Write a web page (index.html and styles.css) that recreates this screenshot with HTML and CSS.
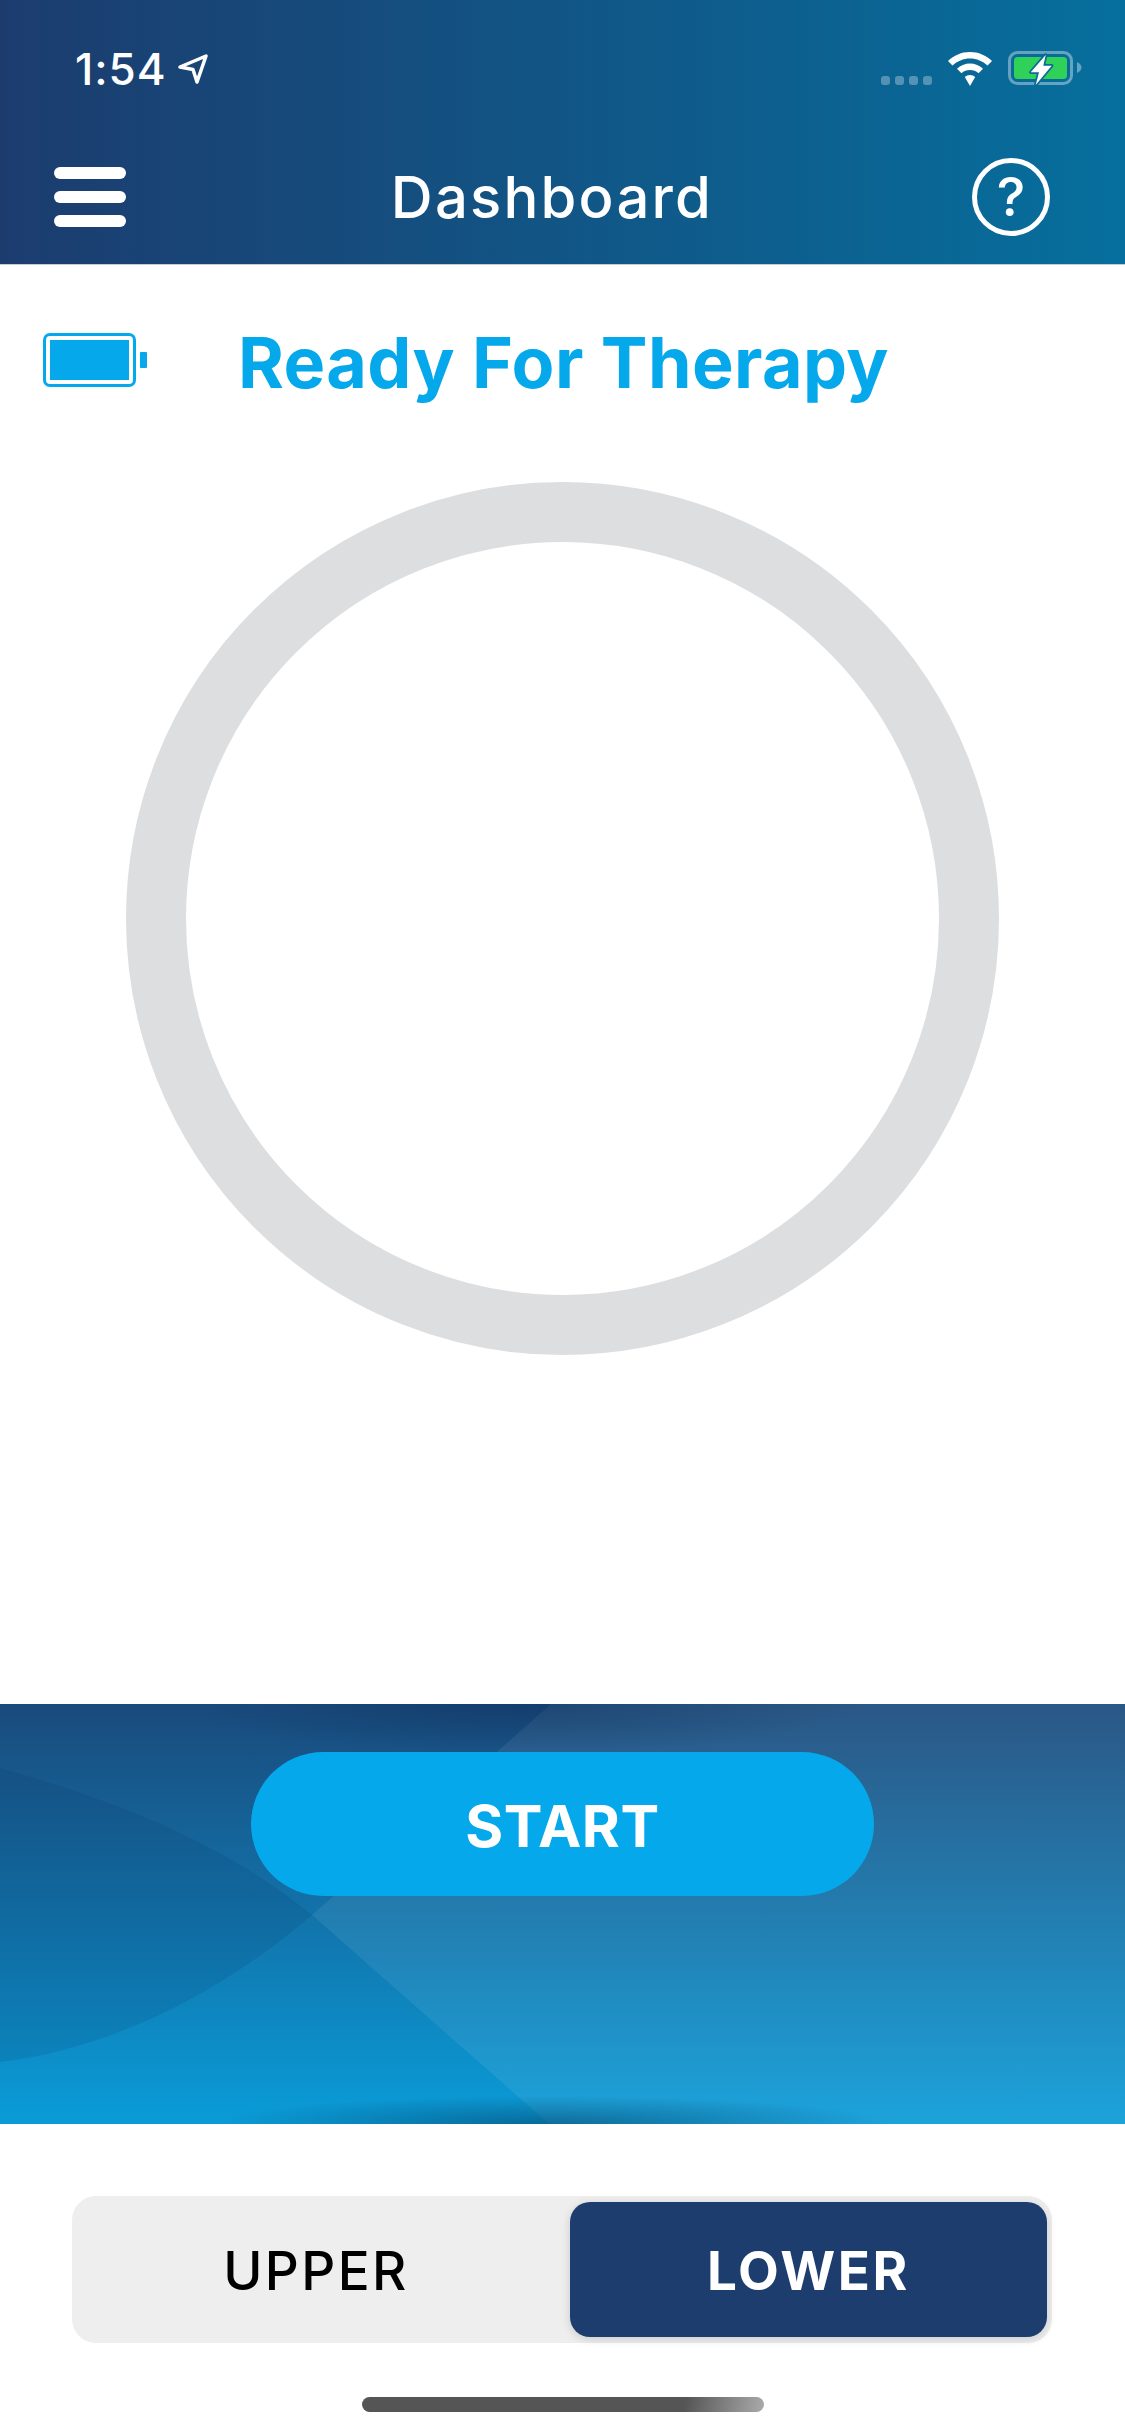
FILE: index.html
```html
<!DOCTYPE html>
<html lang="en">
<head>
<meta charset="utf-8">
<title>Dashboard</title>
<link rel="stylesheet" href="styles.css">
</head>
<body>
<div class="app">
  <header class="header">
    <div class="status">
      <div class="status-left">
        <span class="time">1:54</span>
        <svg class="loc" width="30" height="30" viewBox="0 0 30 30"><path d="M2 13 28 2 19 28 15 15.500Z" fill="none" stroke="#fff" stroke-width="3.500" stroke-linejoin="round"/></svg>
      </div>
      <div class="status-right">
        <div class="dots"><i></i><i></i><i></i><i></i></div>
        <svg class="wifi" width="46" height="34" viewBox="0 0 46 34"><path d="M23 0C14.500 0 6.800 3.400 1 9L5.500 13.500C10.200 9.200 16.300 6.500 23 6.500S35.800 9.200 40.500 13.500L45 9C39.200 3.400 31.500 0 23 0ZM23 11.500C18 11.500 13.500 13.500 10 16.800L14.500 21.200C16.800 19.200 19.700 18 23 18S29.200 19.200 31.500 21.200L36 16.800C32.500 13.500 28 11.500 23 11.500ZM23 23C21 23 19.200 23.800 17.800 25L23 34 28.200 25C26.800 23.800 25 23 23 23Z" fill="#fff"/></svg>
        <svg class="batt" width="74" height="36" viewBox="0 0 74 36">
          <rect x="1.500" y="1.500" width="62" height="31" rx="8" fill="none" stroke="#fff" stroke-opacity=".38" stroke-width="3"/>
          <path d="M69 11C72 12.500 73.500 14.500 73.500 16.500S72 20.500 69 22Z" fill="#fff" fill-opacity=".38"/>
          <rect x="6" y="6" width="53" height="22" rx="3.500" fill="#30d158"/>
          <path d="M37.700 4 22.700 21.300H31L27.700 34 43.700 14.700H35.300Z" fill="#fff" stroke="#0a6a98" stroke-width="3.500" stroke-linejoin="round" paint-order="stroke"/>
        </svg>
      </div>
    </div>
    <nav class="nav">
      <div class="burger"><i></i><i></i><i></i></div>
      <h1 class="page-title">Dashboard</h1>
      <div class="help">?</div>
    </nav>
  </header>

  <main class="main">
    <div class="state">
      <div class="cell">
        <div class="cell-body"><div class="cell-fill"></div></div>
        <div class="cell-nub"></div>
      </div>
      <div class="state-text">Ready For Therapy</div>
    </div>
    <div class="ring"></div>
  </main>

  <section class="panel">
    <svg class="panel-art" width="1125" height="420" viewBox="0 0 1125 420" preserveAspectRatio="none">
      <defs>
        <radialGradient id="topshade"><stop offset="0" stop-color="#0a2a55" stop-opacity=".4"/><stop offset="1" stop-color="#0a2a55" stop-opacity="0"/></radialGradient>
        <radialGradient id="botshade"><stop offset="0" stop-color="#05486f" stop-opacity=".6"/><stop offset="1" stop-color="#05486f" stop-opacity="0"/></radialGradient>
      </defs>
      <path d="M551 0H1125V420H549L312 211Z" fill="#fff" fill-opacity=".075"/>
      <path d="M0 64C120 98 225 140 312 211 220 290 110 345 0 358Z" fill="#06305f" fill-opacity=".13"/>
      <ellipse cx="520" cy="0" rx="340" ry="50" fill="url(#topshade)"/>
      <ellipse cx="550" cy="420" rx="340" ry="28" fill="url(#botshade)"/>
    </svg>
    <button class="start">START</button>
  </section>

  <footer class="foot">
    <div class="seg">
      <div class="seg-item seg-off">UPPER</div>
      <div class="seg-item seg-on">LOWER</div>
    </div>
    <div class="home"></div>
  </footer>
</div>
</body>
</html>
```

FILE: styles.css
```css
* { box-sizing: border-box; }
html, body { margin: 0; padding: 0; background: #fff; }
.app { width: 1125px; height: 2436px; display: flex; flex-direction: column; overflow: hidden; font-family: "Inter", "Liberation Sans", sans-serif; }

.header { height: 265px; flex: none; background: linear-gradient(90deg, #1c3c6e 0%, #066f9d 100%); border-bottom: 1px solid #c4ccd4; display: flex; flex-direction: column; }
.status { height: 100px; padding: 52px 43px 0 75px; display: flex; justify-content: space-between; align-items: flex-start; }
.status-left { display: flex; align-items: center; gap: 11px; height: 34px; }
.time { font-weight: 500; font-size: 44px; line-height: 34px; color: #fff; letter-spacing: 1px; }
.status-right { display: flex; align-items: flex-end; gap: 15px; height: 34px; }
.dots { display: flex; gap: 5px; margin-bottom: 1px; }
.dots i { width: 9px; height: 9px; border-radius: 3px; background: rgba(255,255,255,.3); }
.wifi { display: block; }
.batt { display: block; margin-bottom: -1px; }

.nav { flex: 1; padding: 30px 75px 0 54px; display: grid; grid-template-columns: 1fr auto 1fr; align-items: center; }
.burger { width: 72px; display: flex; flex-direction: column; gap: 12px; }
.burger i { display: block; height: 12px; border-radius: 6px; background: #fff; }
.page-title { margin: -1px 0 0; font-weight: 500; font-size: 58px; line-height: 70px; color: #fff; letter-spacing: 2.2px; }
.help { justify-self: end; width: 78px; height: 78px; border: 5px solid #fff; border-radius: 50%; display: flex; align-items: center; justify-content: center; color: #fff; font-size: 54px; line-height: 68px; font-weight: 500; }

.main { flex: 1; display: flex; flex-direction: column; align-items: center; }
.state { align-self: stretch; height: 54px; margin-top: 68px; padding-left: 43px; display: flex; align-items: center; }
.cell { display: flex; align-items: center; gap: 4px; width: 195px; flex: none; }
.cell-body { width: 93px; height: 54px; border: 3px solid #05a8ea; border-radius: 7px; padding: 4px; }
.cell-fill { width: 100%; height: 100%; background: #05a8ea; }
.cell-nub { width: 7px; height: 16px; background: #05a8ea; border-radius: 1px; }
.state-text { margin-top: 5px; font-weight: 700; font-size: 70px; line-height: 54px; color: #05a8ea; white-space: nowrap; letter-spacing: .4px; }
.ring { width: 873px; height: 873px; margin-top: 95px; border: 60px solid #dddee0; border-radius: 50%; }

.panel { height: 420px; flex: none; position: relative; background: linear-gradient(180deg, #1a4a7c 0%, #0a9cd8 100%); display: flex; justify-content: center; padding-top: 48px; overflow: hidden; }
.panel-art { position: absolute; inset: 0; }
.start { position: relative; width: 623px; height: 144px; border: 0; border-radius: 72px; background: #05a8ea; color: #fff; font-family: inherit; font-weight: 700; font-size: 58px; letter-spacing: .6px; padding: 4px 0 0; }

.foot { height: 312px; flex: none; display: flex; flex-direction: column; align-items: center; }
.seg { width: 980px; height: 147px; margin: 72px 1px 0 0; padding: 6px 5px 6px 0; display: flex; border-radius: 24px; background: #eeeeee; }
.seg-item { flex: 1; display: flex; align-items: center; justify-content: center; padding-top: 2px; font-weight: 500; font-size: 53px; letter-spacing: 2.4px; color: #000; border-radius: 20px; }
.seg-off { padding-right: 10px; }
.seg-on { flex: none; width: 477px; background: #1c3d6e; color: #fff; font-weight: 700; letter-spacing: 2.6px; box-shadow: 0 2px 10px rgba(0,0,0,.15); }
.home { width: 402px; height: 15px; margin-top: 54px; border-radius: 8px; background: linear-gradient(100deg, #555 0%, #555 80%, #aaa 100%); }
```
